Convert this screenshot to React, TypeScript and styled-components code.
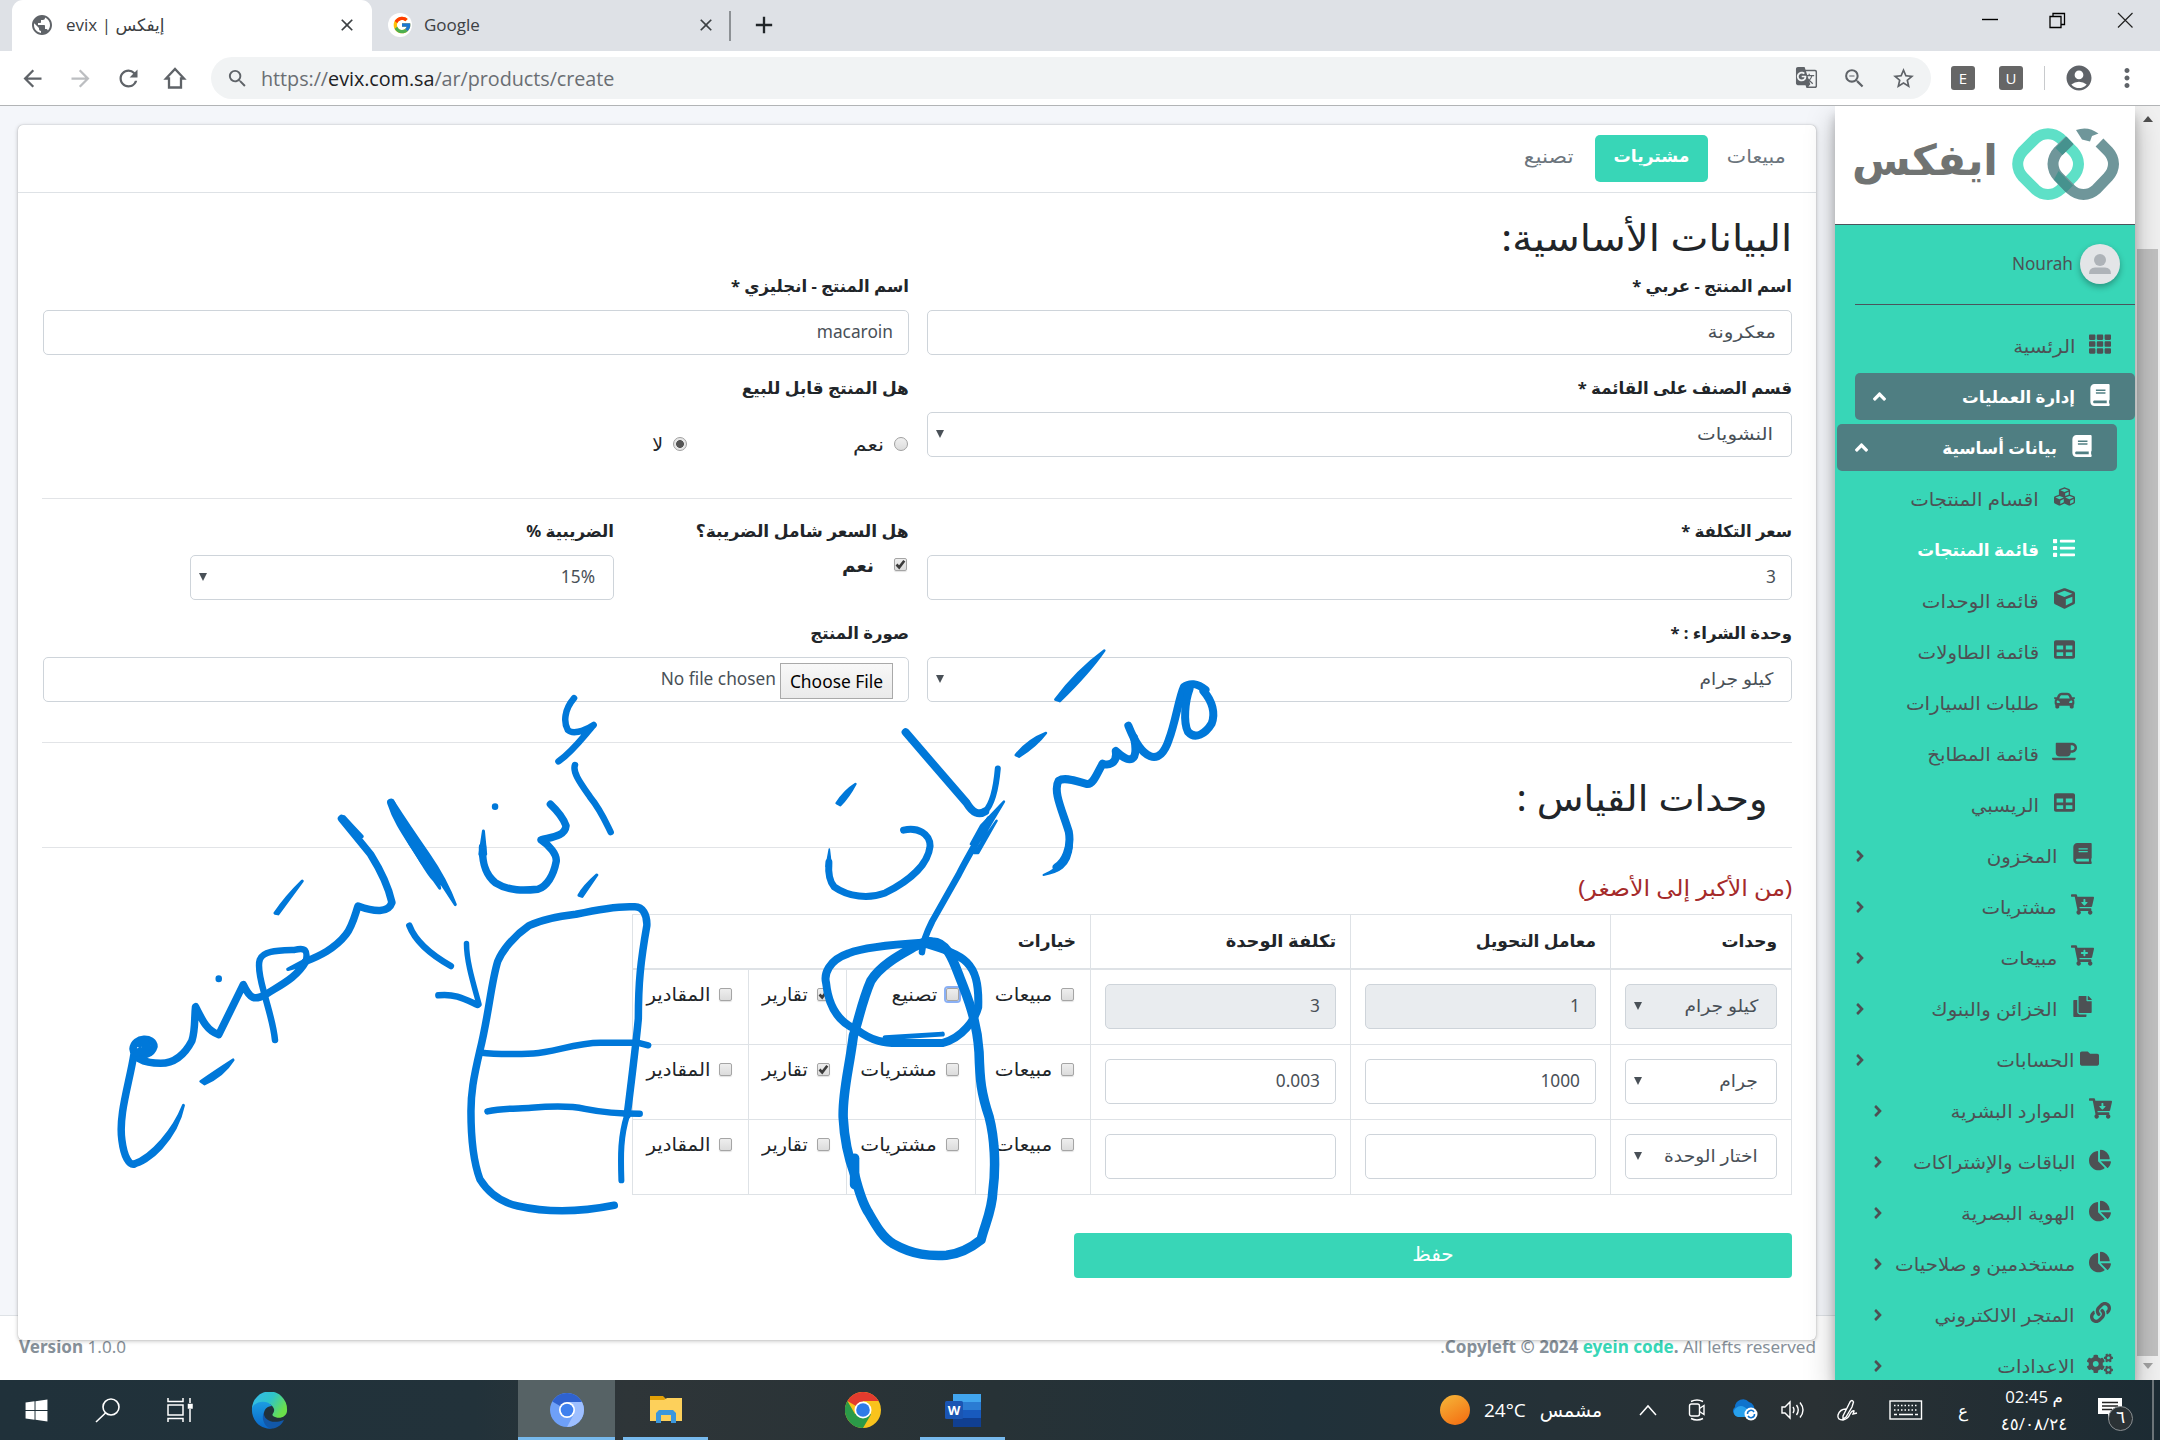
import React from "react";
import styled, { createGlobalStyle, css } from "styled-components";
import {
  FaTh, FaBook, FaAngleUp, FaAngleRight, FaCubes, FaList, FaCube, FaTable, FaCar, FaCoffee,
  FaCartArrowDown, FaCartPlus, FaCopy, FaFolder, FaChartPie, FaLink, FaCogs, FaWindows,
} from "react-icons/fa";
import {
  MdArrowBack, MdArrowForward, MdRefresh, MdSearch, MdPublic, MdGTranslate, MdZoomOut,
  MdStarBorder, MdAccountCircle, MdMoreVert, MdClose, MdAdd,
} from "react-icons/md";
import { FcGoogle } from "react-icons/fc";

const teal = "#38d6b7";
const slate = "#4f7e82";
const line = "#dee2e6";
const ink = "#0078d9";
const pageFont = `"Noto Sans", "DejaVu Sans", sans-serif`;
const chromeFont = `"Open Sans", "Noto Sans", "DejaVu Sans", sans-serif`;

const Global = createGlobalStyle`
  *, *::before, *::after { box-sizing: border-box; }
  body { margin: 0; font-family: ${pageFont}; font-size: 17px; color: #212529; overflow: hidden; }
  svg { display: block; flex: none; }
`;

const Screen = styled.div`
  width: 2160px;
  height: 1440px;
  display: flex;
  flex-direction: column;
  position: relative;
  overflow: hidden;
`;

/* Arabic set a little wider than the fallback face draws it */
const Wide = styled.span<{ $by?: number }>`
  display: inline-block;
  transform: scaleX(${(p) => p.$by ?? 1.08});
  transform-origin: right center;
`;

/* ---------- browser chrome ---------- */
const TabStrip = styled.div`
  height: 51px;
  flex: none;
  background: #dee1e6;
  display: flex;
  padding-left: 12px;
  font-family: ${chromeFont};
  font-size: 17px;
`;
const Tab = styled.div<{ $active?: boolean; $w: number }>`
  width: ${(p) => p.$w}px;
  display: flex;
  align-items: center;
  padding: 0 ${(p) => (p.$active ? 15 : 13)}px 2px ${(p) => (p.$active ? 18 : 16)}px;
  gap: 12px;
  background: ${(p) => (p.$active ? "#fff" : "transparent")};
  border-radius: 11px 11px 0 0;
  color: #3c4043;
  svg:last-child { margin-left: auto; }
`;
const FavBubble = styled.span`
  width: 24px;
  height: 24px;
  border-radius: 50%;
  background: #fff;
  display: grid;
  place-items: center;
`;
const TabRule = styled.div`
  width: 2px;
  height: 30px;
  margin: 11px 19px 0 0;
  background: #8d9195;
`;
const NewTab = styled.div`
  display: flex;
  align-items: center;
  padding-bottom: 2px;
`;
const WindowButtons = styled.div`
  margin-left: auto;
  display: flex;
  padding: 12px 27px 0 0;
  gap: 51px;
`;
const Toolbar = styled.div`
  height: 55px;
  flex: none;
  background: #fff;
  border-bottom: 1.5px solid #b2b4b6;
  display: flex;
  align-items: center;
  padding: 0 18px 0 19px;
  color: #5f6368;
`;
const NavIcons = styled.div`
  display: flex;
  gap: 21px;
  width: 192px;
`;
const Omnibox = styled.div`
  width: 1720px;
  height: 42px;
  border-radius: 21px;
  background: #f1f3f4;
  display: flex;
  align-items: center;
  padding: 0 15px;
  font-family: ${chromeFont};
  font-size: 19.8px;
`;
const Url = styled.span`
  margin-left: 12px;
  margin-right: auto;
  letter-spacing: -0.05px;
  color: #6a6e73;
  b { font-weight: 400; color: #202124; }
`;
const OmniActions = styled.div`
  display: flex;
  gap: 24px;
`;
const Extensions = styled.div`
  margin-left: auto;
  display: flex;
  align-items: center;
  svg + svg { margin-left: 18px; }
`;
const Ext = styled.span`
  width: 24px;
  height: 24px;
  border-radius: 3px;
  background: #666;
  color: #fff;
  font: 15px/24px ${chromeFont};
  text-align: center;
  margin-right: 24px;
`;
const ExtRule = styled.span`
  width: 1px;
  height: 24px;
  margin: 0 19px 0 -3px;
  background: #c8cacd;
`;

/* ---------- page ---------- */
const Page = styled.div`
  flex: 1;
  min-height: 0;
  display: flex;
  background: #f4f6fa;
  overflow: hidden;
`;
const Content = styled.div`
  width: 1835px;
  padding: 19px 0 0;
  direction: rtl;
`;
const Card = styled.main`
  position: relative;
  width: 1798px;
  height: 1215px;
  margin-right: 19px;
  background: #fff;
  border-radius: 5px;
  box-shadow: 0 0 1px rgba(0, 0, 0, 0.3), 0 1px 4px rgba(0, 0, 0, 0.25);
`;
const CardTabs = styled.div`
  height: 68px;
  display: flex;
  border-bottom: 1.5px solid ${line};
  padding: 10px 11px 0;
`;
const CardTab = styled.div<{ $active?: boolean; $w: number }>`
  width: ${(p) => p.$w}px;
  height: 47px;
  line-height: 42px;
  text-align: center;
  border-radius: 5px;
  font-size: 19px;
  color: #6c757d;
  span { transform-origin: center; }
  ${(p) => p.$active && css`background: ${teal}; color: #fff; font-weight: 700; font-size: 17.2px;`}
`;
const Body = styled.div`
  padding: 20px 24px 0;
`;
const Title = styled.h1<{ $inset?: boolean }>`
  margin: 0;
  height: 50px;
  line-height: 48px;
  font-size: 36.5px;
  font-weight: 400;
  ${(p) => p.$inset && css`height: 104px; line-height: 108px; padding-right: 25px; font-size: 35.5px;`}
`;
const FormRow = styled.div<{ $gap?: number }>`
  display: grid;
  grid-template-columns: 865px 866px;
  column-gap: 18px;
  height: 102px;
  margin-top: ${(p) => p.$gap ?? 0}px;
`;
const Label = styled.div`
  height: 49px;
  line-height: 49px;
  font-weight: 700;
  font-size: 16.6px;
  white-space: nowrap;
`;
const Box = styled.div<{ $muted?: boolean; $select?: boolean }>`
  height: 45px;
  border: 1.5px solid #ced4da;
  border-radius: 5px;
  background: ${(p) => (p.$muted ? "#e9ecef" : "#fff")};
  color: #495057;
  display: flex;
  align-items: center;
  justify-content: ${(p) => (p.$select ? "space-between" : "flex-start")};
  padding: ${(p) => (p.$select ? "0 18px 2px 8px" : "0 15px 2px")};
  font-size: 17.3px;
  white-space: nowrap;
`;
const Arrow = styled.i`
  border: 4.5px solid transparent;
  border-top: 8.5px solid #495057;
  border-bottom: 0;
`;
const RadioRow = styled.div`
  display: flex;
  padding: 24px 1px 0 0;
`;
const RadioOption = styled.div`
  width: 221px;
  display: flex;
  align-items: center;
  gap: 10px;
  font-size: 19px;
  height: 16px;
`;
const Radio = styled.span<{ $on?: boolean }>`
  width: 14px;
  height: 14px;
  border-radius: 50%;
  border: 1px solid #a0a0a0;
  background: ${(p) =>
    p.$on ? "radial-gradient(circle, #555 0 3.6px, #e6e6e6 4.2px)" : "linear-gradient(#f0f0f0, #dcdcdc)"};
`;
const Tick = styled.span<{ $focus?: boolean }>`
  width: 13px;
  height: 13px;
  border: 1px solid #a5a5a5;
  border-radius: 2px;
  background: linear-gradient(#eeeeee, #dcdcdc);
  box-shadow: ${(p) => (p.$focus ? "0 0 0 2px #8ab0f5" : "0 1px 1px rgba(0,0,0,.12)")};
  display: grid;
  place-items: center;
`;
const TaxGrid = styled.div`
  display: grid;
  grid-template-columns: 295px 424px;
`;
const CheckLine = styled.div`
  display: flex;
  gap: 20px;
  align-items: center;
  height: 18px;
  font-size: 18.5px;
  font-weight: 700;
  padding-right: 2px;
`;
const FileButton = styled.button`
  height: 36px;
  width: 113px;
  padding: 0;
  margin: 5px 0 0 4px;
  border: 1.5px solid #a9a9a9;
  background: linear-gradient(#f8f8f8, #eaeaea);
  font: 17.4px ${pageFont};
  color: #000;
`;
const Rule = styled.div<{ $top?: number }>`
  margin-top: ${(p) => p.$top ?? 0}px;
  height: 1px;
  background: #e2e4e7;
`;
const Hint = styled.div`
  height: 66px;
  line-height: 79px;
  color: #a52a2a;
  font-size: 22px;
`;
const Table = styled.div`
  width: 1160px;
  border: 1.5px solid ${line};
`;
const TableRow = styled.div<{ $head?: boolean }>`
  display: grid;
  grid-template-columns: ${(p) => (p.$head ? "181px 260px 260px 1fr" : "181px 260px 260px 115px 129px 98px 1fr")};
  height: ${(p) => (p.$head ? 55 : 75)}px;
  border-bottom: ${(p) => (p.$head ? 2.5 : 1)}px solid ${line};
  &:last-child { border-bottom: 0; height: 74px; }
`;
const Cell = styled.div<{ $last?: boolean }>`
  padding: 14px;
  border-left: ${(p) => (p.$last ? 0 : 1)}px solid ${line};
`;
const HeadCell = styled(Cell)`
  padding: 0 14px;
  line-height: 52px;
  font-size: 17px;
  font-weight: 700;
`;
const OptionCell = styled(Cell)`
  padding: 18px 16px 0 0;
  display: flex;
  align-items: flex-start;
  gap: 9px;
  white-space: nowrap;
  font-size: 18.6px;
  line-height: 12px;
`;
const Save = styled.button`
  display: block;
  width: 718px;
  height: 45px;
  margin-top: 38px;
  padding: 0 0 5px;
  border: 0;
  border-radius: 4px;
  background: ${teal};
  color: #fff;
  font: 20px ${pageFont};
`;
const Footer = styled.footer`
  height: 66px;
  margin-top: -25px;
  padding: 18px 19px 0;
  background: #fff;
  border-top: 1.5px solid ${line};
  display: flex;
  justify-content: space-between;
  color: #869099;
  font-size: 17.1px;
  line-height: 26px;
  em { font-style: normal; color: ${teal}; }
`;

/* ---------- sidebar ---------- */
const Sidebar = styled.aside`
  position: relative;
  width: 300px;
  background: ${teal};
  box-shadow: 0 14px 28px rgba(0, 0, 0, 0.25), 0 10px 10px rgba(0, 0, 0, 0.22);
  direction: rtl;
  color: #4d5154;
`;
const Brand = styled.div`
  height: 119px;
  background: #fff;
  border-bottom: 1.5px solid #4b545c;
  direction: ltr;
  display: flex;
  align-items: center;
  justify-content: space-between;
  padding: 0 15px 1px 17px;
`;
const BrandName = styled.span`
  color: #707372;
  font: 700 42.5px/60px "DejaVu Sans", sans-serif;
  margin-top: -8px;
`;
const UserPanel = styled.div`
  height: 80px;
  margin-left: 20px;
  border-bottom: 1.5px solid #4b545c;
  display: flex;
  align-items: center;
  gap: 7px;
  padding: 0 15px 2px 0;
  font-size: 17.2px;
`;
const Avatar = styled.span`
  width: 40px;
  height: 40px;
  border-radius: 50%;
  background: #e3e5e7;
  box-shadow: 0 3px 6px rgba(0, 0, 0, 0.3);
`;
const Nav = styled.nav`
  padding-top: 17px;
`;
const NavItem = styled.div<{ $level: number; $active?: boolean; $on?: boolean }>`
  width: 280px;
  height: 47px;
  margin: 0 ${(p) => p.$level * 18}px 4px 0;
  padding: 0 21px 0 14px;
  display: flex;
  align-items: center;
  border-radius: 5px;
  font-size: 18.6px;
  white-space: nowrap;
  ${(p) => p.$active && css`background: ${slate}; color: #fff; font-weight: 700; font-size: 16.7px;`}
  ${(p) => p.$on && css`color: #fff; font-weight: 700; font-size: 16.8px;`}
`;
const NavIcon = styled.span<{ $tight?: boolean }>`
  width: 28px;
  display: grid;
  place-items: center;
  margin: -4px 0 0 ${(p) => (p.$tight ? 0 : 11)}px;
  ${(p) => p.$tight && css`margin: -2px -7px 0 1px;`}
`;
const NavArrow = styled.span`
  margin-right: auto;
`;
const ScrollBar = styled.div`
  width: 25px;
  background: #f1f1f1;
  display: flex;
  flex-direction: column;
  align-items: center;
  padding: 10px 0 11px;
`;
const Thumb = styled.div`
  width: 21px;
  height: 1107px;
  margin: 127px 0 auto;
  background: #c1c1c1;
`;
const ScrollArrow = styled.i<{ $down?: boolean }>`
  border: 5.5px solid transparent;
  ${(p) =>
    p.$down
      ? css`border-top: 6px solid #a3a3a3; border-bottom: 0;`
      : css`border-bottom: 6px solid #505050; border-top: 0;`}
`;

/* ---------- ink ---------- */
const Ink = styled.svg`
  position: absolute;
  left: 0;
  top: 0;
  pointer-events: none;
  path { vector-effect: non-scaling-stroke; }
`;

/* ---------- taskbar ---------- */
const Taskbar = styled.div`
  height: 60px;
  flex: none;
  display: flex;
  background: linear-gradient(90deg, #20313a 0%, #22323a 22%, #2e3538 29%, #273236 46%, #20313a 60%, #2a3134 84%, #1c2b33 100%);
  color: #fff;
  font-family: ${chromeFont};
`;
const Slot = styled.div<{ $w: number; $state?: "open" | "active" }>`
  width: ${(p) => p.$w}px;
  display: flex;
  align-items: center;
  justify-content: center;
  padding-top: 3px;
  border-bottom: 3px solid ${(p) => (p.$state ? "#76b9ed" : "transparent")};
  background: ${(p) => (p.$state === "active" ? "#566265" : "transparent")};
`;
const Weather = styled.div`
  display: flex;
  align-items: center;
  width: 190px;
  font-size: 19px;
  gap: 14px;
`;
const Sun = styled.span`
  width: 30px;
  height: 30px;
  border-radius: 50%;
  background: linear-gradient(150deg, #f5b83a, #f4690f);
`;
const Clock = styled.div`
  width: 84px;
  font-size: 16.8px;
  line-height: 27px;
  text-align: center;
  padding-top: 3px;
  white-space: nowrap;
`;
const Badge = styled.span`
  position: absolute;
  left: 11px;
  top: 9px;
  width: 25px;
  height: 25px;
  border-radius: 50%;
  border: 1.5px solid #8a8f92;
  background: #2b3235;
  font-size: 17px;
  line-height: 20px;
  text-align: center;
`;
const Notice = styled.div`
  position: relative;
  width: 36px;
  height: 34px;
  margin: 17px 0 0 21px;
`;
const ShowDesktop = styled.div`
  margin-left: auto;
  width: 8px;
  border-left: 2px solid #6c7478;
`;

type Item = { text: string; icon: React.ReactNode; level: number; arrow?: "up" | "side"; active?: boolean; on?: boolean; tight?: boolean };
const items: Item[] = [
  { text: "الرئسية", icon: <FaTh size={22} />, level: 0 },
  { text: "إدارة العمليات", icon: <FaBook size={22} />, level: 0, arrow: "up", active: true },
  { text: "بيانات أساسية", icon: <FaBook size={22} />, level: 1, arrow: "up", active: true },
  { text: "اقسام المنتجات", icon: <FaCubes size={21} />, level: 2 },
  { text: "قائمة المنتجات", icon: <FaList size={22} />, level: 2, on: true },
  { text: "قائمة الوحدات", icon: <FaCube size={21} />, level: 2 },
  { text: "قائمة الطاولات", icon: <FaTable size={21} />, level: 2 },
  { text: "طلبات السيارات", icon: <FaCar size={21} />, level: 2 },
  { text: "قائمة المطابخ", icon: <FaCoffee size={25} />, level: 2 },
  { text: "الريسبي", icon: <FaTable size={21} />, level: 2 },
  { text: "المخزون", icon: <FaBook size={21} />, level: 1, arrow: "side" },
  { text: "مشتريات", icon: <FaCartArrowDown size={23} />, level: 1, arrow: "side" },
  { text: "مبيعات", icon: <FaCartPlus size={23} />, level: 1, arrow: "side" },
  { text: "الخزائن والبنوك", icon: <FaCopy size={21} />, level: 1, arrow: "side" },
  { text: "الحسابات", icon: <FaFolder size={19} />, level: 1, arrow: "side", tight: true },
  { text: "الموارد البشرية", icon: <FaCartArrowDown size={23} />, level: 0, arrow: "side" },
  { text: "الباقات والإشتراكات", icon: <FaChartPie size={22} />, level: 0, arrow: "side" },
  { text: "الهوية البصرية", icon: <FaChartPie size={22} />, level: 0, arrow: "side" },
  { text: "مستخدمين و صلاحيات", icon: <FaChartPie size={22} />, level: 0, arrow: "side" },
  { text: "المتجر الالكتروني", icon: <FaLink size={21} />, level: 0, arrow: "side" },
  { text: "الاعدادات", icon: <FaCogs size={26} />, level: 0, arrow: "side" },
];

const units = [
  { unit: "كيلو جرام", factor: "1", cost: "3", second: "تصنيع", muted: true, reports: true, focus: true },
  { unit: "جرام", factor: "1000", cost: "0.003", second: "مشتريات", reports: true },
  { unit: "اختار الوحدة", factor: "", cost: "", second: "مشتريات" },
];

const Check = ({ on, focus }: { on?: boolean; focus?: boolean }) => (
  <Tick $focus={focus}>
    {on && (
      <svg width="11" height="11" viewBox="0 0 11 11">
        <path d="M1.5 5.5 L4.2 8.4 L9.3 1.8" fill="none" stroke="#3c3c3c" strokeWidth="2.6" />
      </svg>
    )}
  </Tick>
);

const Logo = () => (
  <svg width="108" height="73" viewBox="0 0 108 73">
    <path d="M36 5.7 Q43 5.7 48.500 10.500 L61 23 Q66.500 29 66.500 36 Q66.500 43 61 49 L48.500 61.500 Q43 66.500 36 66.500 Q29 66.500 23.500 61.500 L11 49 Q5.700 43 5.700 36 Q5.700 29 11 23 L23.500 10.500 Q29 5.700 36 5.700 Z" fill="none" stroke="#5ee0c7" strokeWidth="11" />
    <path d="M57.500 12.500 L46.500 23 Q41 29 41 36 Q41 43 46.500 49 L59 61.500 Q64.500 66.500 71.500 66.500 Q78.500 66.500 84 61.500 L96 49 Q101.500 43 101.500 36 Q101.500 29 96 23 L87.500 14.500" fill="none" stroke="#6f969a" strokeWidth="11" />
    <path d="M54.500 8.500 L61.500 16 L50.500 27 L43.500 20 Z M46.500 43 L61 57.500 L54 64.500 L42 51.500 Z" fill="#46928e" />
    <path d="M64 2 Q76 -2.500 86.500 5.500 L80 8 L78 13.500 L70 11.500 Z" fill="#6f969a" />
  </svg>
);

const Browser = () => (
  <>
    <TabStrip>
      <Tab $active $w={360}>
        <MdPublic size={24} color="#5f6368" />
        <span>evix | إيفكس</span>
        <MdClose size={20} />
      </Tab>
      <Tab $w={357}>
        <FavBubble><FcGoogle size={20} /></FavBubble>
        <span>Google</span>
        <MdClose size={20} />
      </Tab>
      <TabRule />
      <NewTab><MdAdd size={28} /></NewTab>
      <WindowButtons>
        <svg width="16" height="17"><path d="M0 7.5H16" stroke="#000" strokeWidth="1.4" /></svg>
        <svg width="17" height="17" fill="none" stroke="#000" strokeWidth="1.3"><path d="M1 4.5H12V15.5H1Z M4 4V1.5H15.5V12.5H12" /></svg>
        <svg width="16" height="17"><path d="M1 1 L15.5 15.5 M15.5 1 L1 15.5" stroke="#222" strokeWidth="1.2" /></svg>
      </WindowButtons>
    </TabStrip>
    <Toolbar>
      <NavIcons>
        <MdArrowBack size={27} />
        <MdArrowForward size={27} color="#bcbec1" />
        <MdRefresh size={27} />
        <svg width="24" height="26" viewBox="0 0 24 26" fill="none" stroke="#5f6368" strokeWidth="2.3">
          <path d="M3 13.5 L12 4 L21 13.5 H18 V22.5 H6 V13.5 Z" />
        </svg>
      </NavIcons>
      <Omnibox>
        <MdSearch size={23} />
        <Url>https://<b>evix.com.sa</b>/ar/products/create</Url>
        <OmniActions>
          <MdGTranslate size={23} />
          <MdZoomOut size={25} />
          <MdStarBorder size={25} />
        </OmniActions>
      </Omnibox>
      <Extensions>
        <Ext>E</Ext>
        <Ext>U</Ext>
        <ExtRule />
        <MdAccountCircle size={30} />
        <MdMoreVert size={30} />
      </Extensions>
    </Toolbar>
  </>
);

const ProductForm = () => (
  <Card>
    <CardTabs>
      <CardTab $w={97}><Wide>مبيعات</Wide></CardTab>
      <CardTab $w={113} $active>مشتريات</CardTab>
      <CardTab $w={92}><Wide $by={1.15}>تصنيع</Wide></CardTab>
    </CardTabs>
    <Body>
      <Title><Wide $by={1.105}>البيانات الأساسية:</Wide></Title>
      <FormRow $gap={-2}>
        <div><Label>اسم المنتج - عربي *</Label><Box><Wide $by={1.16}>معكرونة</Wide></Box></div>
        <div><Label>اسم المنتج - انجليزي *</Label><Box>macaroin</Box></div>
      </FormRow>
      <FormRow>
        <div><Label>قسم الصنف على القائمة *</Label><Box $select><Wide $by={1.15}>النشويات</Wide><Arrow /></Box></div>
        <div>
          <Label><Wide $by={1.02}>هل المنتج قابل للبيع</Wide></Label>
          <RadioRow>
            <RadioOption><Radio /><Wide $by={1.15}>نعم</Wide></RadioOption>
            <RadioOption><Radio $on />لا</RadioOption>
          </RadioRow>
        </div>
      </FormRow>
      <Rule $top={33} />
      <FormRow $gap={7}>
        <div><Label>سعر التكلفة *</Label><Box>3</Box></div>
        <TaxGrid>
          <div>
            <Label><Wide $by={1.03}>هل السعر شامل الضريبة؟</Wide></Label>
            <CheckLine><Check on />نعم</CheckLine>
          </div>
          <div><Label>الضريبية %</Label><Box $select>15%<Arrow /></Box></div>
        </TaxGrid>
      </FormRow>
      <FormRow>
        <div><Label>وحدة الشراء : *</Label><Box $select><Wide>كيلو جرام</Wide><Arrow /></Box></div>
        <div>
          <Label>صورة المنتج</Label>
          <Box><FileButton>Choose File</FileButton>No file chosen</Box>
        </div>
      </FormRow>
      <Rule $top={32} />
      <Title $inset><Wide $by={1.08}>وحدات القياس :</Wide></Title>
      <Rule />
      <Hint><Wide>(من الأكبر إلى الأصغر)</Wide></Hint>
      <Table>
        <TableRow $head>
          <HeadCell>وحدات</HeadCell>
          <HeadCell>معامل التحويل</HeadCell>
          <HeadCell><Wide $by={1.05}>تكلفة الوحدة</Wide></HeadCell>
          <HeadCell $last>خيارات</HeadCell>
        </TableRow>
        {units.map((u, i) => (
          <TableRow key={i}>
            <Cell><Box $select $muted={u.muted}><Wide>{u.unit}</Wide><Arrow /></Box></Cell>
            <Cell><Box $muted={u.muted}>{u.factor}</Box></Cell>
            <Cell><Box $muted={u.muted}>{u.cost}</Box></Cell>
            <OptionCell><Check /><Wide>مبيعات</Wide></OptionCell>
            <OptionCell><Check focus={u.focus} /><Wide>{u.second}</Wide></OptionCell>
            <OptionCell><Check on={u.reports} /><Wide $by={1.02}>تقارير</Wide></OptionCell>
            <OptionCell $last><Check /><Wide $by={1.06}>المقادير</Wide></OptionCell>
          </TableRow>
        ))}
      </Table>
      <Save>حفظ</Save>
    </Body>
  </Card>
);

const InkStrokes = () => (
  <Ink width="2160" height="1440" viewBox="0 0 2160 1440" fill="none" stroke={ink} strokeLinecap="round" strokeLinejoin="round">
    <g transform="matrix(0.4464 0 0 0.3571 0 640)" strokeWidth="6.500">
      <path d="M1286 163 C1264 195 1262 230 1272 252 C1282 264 1305 258 1330 238 C1312 262 1285 310 1251 340" />
      <path d="M1288 350 C1282 370 1300 400 1322 440 C1345 475 1355 505 1368 538" />
      <path d="M1109 466 V467 M490 948 V949" />
      <path d="M1233 460 C1250 480 1262 500 1268 520 C1266 550 1235 552 1212 560 C1230 575 1248 600 1246 620 C1240 660 1225 690 1205 698 C1175 702 1140 704 1110 680 C1085 655 1080 620 1081 580" strokeWidth="7.500" />
      <path d="M1075 600 L1083 535 L1088 600 Z M1297 715 Q1308 690 1337 658 L1304 718 Z M616 765 Q640 720 677 675 L623 767 Z M450 1236 Q480 1210 522 1176 Q500 1220 458 1243 Z" fill={ink} strokeWidth="3" />
      <path d="M876 455 C880 480 900 530 918 570 C940 610 955 650 972 672 L985 695 L980 665 L1020 741 C1005 690 985 645 960 600 C935 555 900 490 882 455 Z" fill={ink} strokeWidth="3" />
      <path d="M876 455 C890 510 915 550 950 620" strokeWidth="8" />
      <path d="M765 500 L830 600 C855 650 870 690 878 735 C870 765 840 762 802 745 C795 770 790 800 775 825 C750 865 715 885 685 900" strokeWidth="7.500" />
      <path d="M763 503 L795 548 L811 550 L790 522 L770 495 Z M645 922 L690 892 L680 910 Z" fill={ink} strokeWidth="3.500" />
      <path d="M685 900 C690 870 685 860 660 868 C620 870 590 870 582 895 C575 920 588 970 593 995 C605 1050 613 1080 616 1120" />
      <path d="M685 900 C665 945 630 965 595 993 C570 1010 560 1005 545 965 L490 1105 C465 1095 455 1070 438 1027 C435 1060 438 1090 430 1122 C410 1170 385 1185 360 1185 C320 1185 300 1170 298 1145 C300 1110 345 1110 345 1138 C340 1160 320 1168 300 1160 C290 1240 265 1330 273 1400 C278 1450 290 1470 300 1468" strokeWidth="7.500" />
      <path d="M312 1130 C325 1120 335 1135 322 1150 L308 1155" strokeWidth="8" />
      <path d="M298 1462 C340 1445 390 1370 411 1303 C395 1400 330 1470 300 1472 Z" fill={ink} strokeWidth="3" />
      <path d="M917 800 Q935 860 1010 913 M982 995 C1020 990 1040 1005 1070 1022" />
      <path d="M1045 850 C1045 900 1060 960 1073 1020" strokeWidth="5.500" />
      <path d="M1392 1513 C1390 1440 1390 1390 1405 1330 C1415 1230 1425 1130 1430 1060" strokeWidth="6" />
      <path d="M1405 1330 C1415 1230 1425 1130 1430 1060 C1430 960 1435 900 1449 800 C1450 770 1440 745 1420 747 C1390 745 1330 757 1290 768 C1240 775 1210 785 1185 800 C1150 830 1125 870 1115 900 C1100 960 1095 1050 1075 1150 C1060 1230 1055 1270 1055 1320 C1055 1400 1060 1460 1075 1510 C1095 1550 1125 1575 1160 1585 C1230 1605 1300 1602 1376 1583" strokeWidth="7.500" />
      <path d="M1075 1155 C1120 1162 1160 1160 1195 1158 C1240 1155 1290 1128 1345 1128 L1430 1128 L1452 1135 M1092 1320 C1130 1310 1160 1313 1190 1310 C1240 1305 1280 1305 1310 1313 C1350 1323 1400 1327 1433 1327" />
    </g>
    <g transform="translate(620 640) scale(0.408)" strokeWidth="8">
      <path d="M1067 146 Q1120 75 1187 26 Q1150 80 1078 150 Z M970 282 Q1000 245 1044 228 Q1020 260 978 286 Z M531 400 Q550 370 577 353 Q560 385 540 405 Z" fill={ink} strokeWidth="2.500" />
      <path d="M1435 122 C1415 105 1395 105 1382 115 C1370 140 1362 200 1345 245 C1335 275 1320 292 1300 285 C1275 275 1260 245 1246 210" />
      <path d="M1260 240 C1272 300 1250 305 1215 272 C1220 305 1195 308 1183 303 C1170 325 1160 355 1145 353 C1115 345 1090 335 1075 345 C1060 370 1085 420 1100 470 C1107 510 1090 545 1070 557" />
      <path d="M1038 576 C1080 560 1095 530 1098 490 L1108 500 C1105 560 1070 570 1038 576 Z" fill={ink} strokeWidth="2" />
      <path d="M1396 120 C1385 150 1380 200 1392 225 C1410 245 1435 230 1450 205 C1460 180 1452 150 1430 125" />
      <path d="M850 400 C865 425 880 430 895 420 C915 400 922 360 926 315" strokeWidth="6" />
      <path d="M700 226 L850 400 C865 425 880 430 895 420" strokeWidth="8" />
      <path d="M868 522 L923 443 L878 522 Z M941 396 L885 455 L860 500 L885 490 Z" fill={ink} strokeWidth="2.500" />
      <path d="M905 440 C880 485 850 535 830 575 L765 690 C750 720 742 740 740 765" strokeWidth="6.500" />
      <path d="M695 466 C730 458 760 475 760 505 C755 550 710 590 650 620 C610 635 560 630 525 605 C512 590 510 570 512 545" strokeWidth="7" />
      <path d="M505 555 L513 512 L518 555 Z" fill={ink} strokeWidth="1.500" />
      <path d="M740 742 C690 745 600 752 560 768 C510 785 500 820 505 840 C510 890 530 935 580 955 C620 985 650 988 680 988 L790 988 C840 975 870 930 878 900 C880 840 870 810 850 790 C830 770 800 760 740 742" />
      <path d="M650 975 L790 966" strokeWidth="5" />
      <path d="M725 750 C690 770 640 795 615 835 C595 880 585 930 572 970 C560 1060 545 1110 547 1170 C550 1230 560 1270 575 1310 C585 1350 600 1390 610 1405 C630 1440 645 1465 670 1480 C720 1508 760 1510 800 1508 C830 1505 860 1490 885 1470 C895 1430 912 1400 914 1350 C922 1290 918 1220 905 1170 C885 1110 882 1080 880 1010 C875 930 850 870 830 820 C815 780 800 740 765 740 C750 738 740 742 725 750" strokeWidth="9.500" />
      <path d="M575 1270 V1335" strokeWidth="9.500" />
    </g>
  </Ink>
);

const WindowsTaskbar = () => (
  <Taskbar>
    <Slot $w={72}><FaWindows size={25} /></Slot>
    <Slot $w={72}>
      <svg width="26" height="26" fill="none" stroke="#fff" strokeWidth="1.6"><circle cx="16" cy="10" r="8" /><path d="M10.5 16 L1 25" /></svg>
    </Slot>
    <Slot $w={72}>
      <svg width="26" height="26" fill="none" stroke="#fff" strokeWidth="1.5">
        <path d="M1 1V4.500H16V1 M1 8H16V18H1Z M1 25V21.500H16V25 M23 1V6 M23 12V25" /><path d="M21.500 7.500H25V11H21.500Z" fill="#fff" />
      </svg>
    </Slot>
    <Slot $w={106}>
      <svg width="37" height="37" viewBox="0 0 37 37">
        <defs>
          <linearGradient id="edgeTop" x1="0" y1="0" x2="1" y2=".5"><stop offset="0" stopColor="#35b8f0" /><stop offset=".55" stopColor="#2fc4c8" /><stop offset="1" stopColor="#6be04a" /></linearGradient>
          <linearGradient id="edgeSide" x1="0" y1="0" x2="0" y2="1"><stop offset="0" stopColor="#1b9de2" /><stop offset="1" stopColor="#0a66c8" /></linearGradient>
        </defs>
        <path d="M1 17 A17.500 17.500 0 0 1 36 17 C37 25 28 28 22 24 C20 22 24 21 23 17 C21 10 8 8 1 17 Z" fill="url(#edgeTop)" />
        <path d="M1 16 C5 8 17 8 21 14 C15 14 12 19 13 25 C14 31 18 35 21 36.500 C9 38 0 28 1 16 Z" fill="url(#edgeSide)" />
        <path d="M13 20 C12 27 20 33 33 28 C30 34 25 37 19 36.500 C13 34 10 26 13 20 Z" fill="#1258a8" />
      </svg>
    </Slot>
    <Slot $w={196} />
    <Slot $w={97} $state="active">
      <svg width="34" height="34" viewBox="-17 -17 34 34">
        <circle r="17" fill="#6ea0f8" />
        <path d="M0 0 L-14.700 -8.500 A17 17 0 0 1 14.700 -8.500 Z" fill="#2f62cf" />
        <path d="M0 -8 H15 A17 17 0 0 1 0 17 L7 4 Z" fill="#9ebfff" />
        <circle r="8" fill="#fff" /><circle r="6.300" fill="#3f80ee" />
      </svg>
    </Slot>
    <Slot $w={8} />
    <Slot $w={85} $state="open">
      <svg width="34" height="28" viewBox="0 0 34 28">
        <path d="M1 0H14L17 3V8H1Z" fill="#e2a006" /><path d="M1 4H15L18 2H33V25H1Z" fill="#fdd05b" />
        <path d="M7 27V17L10 14H24L27 17V27H22V19H12V27Z" fill="#3b97dd" />
      </svg>
    </Slot>
    <Slot $w={112} />
    <Slot $w={85}>
      <svg width="36" height="36" viewBox="-18 -18 36 36">
        <circle r="18" fill="#f9c31c" />
        <path d="M0 0 L-15.600 -9 A18 18 0 0 1 15.600 -9 H0 Z" fill="#e33b2e" />
        <path d="M-15.600 -9 A18 18 0 0 0 0 18 L8 4.500 L0 0 L-8 4 Z" fill="#2b9a48" />
        <circle r="8.500" fill="#fff" /><circle r="6.800" fill="#2f7be8" />
      </svg>
    </Slot>
    <Slot $w={15} />
    <Slot $w={85} $state="open">
      <svg width="36" height="33" viewBox="0 0 36 33">
        <path d="M8 0H36V9H8Z" fill="#41a5ee" /><path d="M8 8H36V17H8Z" fill="#2b7cd3" /><path d="M8 16H36V25H8Z" fill="#185abd" /><path d="M8 24H36V33H8Z" fill="#103f91" />
        <rect y="7" width="18" height="18" rx="1.500" fill="#1a55b3" />
        <text x="9" y="21" textAnchor="middle" fontSize="13" fontWeight="700" fontFamily="Open Sans, sans-serif" fill="#fff">W</text>
      </svg>
    </Slot>
    <Slot $w={435} />
    <Weather><Sun /><span>24°C</span><span>مشمس</span></Weather>
    <Slot $w={36}><svg width="18" height="12" fill="none" stroke="#fff" strokeWidth="1.500"><path d="M1 11 L9 2 L17 11" /></svg></Slot>
    <Slot $w={61}>
      <svg width="18" height="22" fill="none" stroke="#fff" strokeWidth="1.400"><rect x="1.500" y="5" width="10" height="12" rx="2" /><path d="M11.500 9.500L16 6.500V15.500L11.500 12.500 M3 2.500Q9 -.5 15 2.500 M3 19.500Q9 22.500 15 19.500" /></svg>
    </Slot>
    <Slot $w={35}>
      <svg width="26" height="22" viewBox="0 0 26 22"><path d="M6 17 A5 5 0 0 1 3 8 A8 8 0 0 1 17 3 A7 7 0 0 1 22 12 L16 18 Z" fill="#0f73cd" /><path d="M4 9 Q10 4 17 12 L14 18 H6 A5 5 0 0 1 4 9Z" fill="#28a0ec" /><circle cx="19" cy="15" r="6.500" fill="#fff" /><path d="M15.500 15A3.500 3.500 0 0 1 22 13 M22.500 15A3.500 3.500 0 0 1 16 17" fill="none" stroke="#0f73cd" strokeWidth="1.500" /></svg>
    </Slot>
    <Slot $w={61}>
      <svg width="24" height="20" fill="none" stroke="#fff" strokeWidth="1.400"><path d="M1 7H4L9 2V18L4 13H1Z M12 7Q14 10 12 13 M15.500 5Q19 10 15.500 15 M19 2.500Q25 10 19 17.500" /></svg>
    </Slot>
    <Slot $w={47}>
      <svg width="22" height="22" fill="none" stroke="#fff" strokeWidth="1.400"><path d="M7 17L14 3Q16 0 17.500 3L16 8L10 18L7 20Z M10 10Q4 10 2 16Q1 21 7 21Q12 20 14 15Q16 11 18 12L17 15L21 14" /></svg>
    </Slot>
    <Slot $w={72}>
      <svg width="34" height="20" fill="none" stroke="#fff" strokeWidth="1.400"><rect x="1" y="1" width="31.500" height="18" /><path d="M5 5.500H29 M5 10H29" strokeDasharray="1.500 2" /><path d="M5 14.500H8 M10 14.500H24 M26 14.500H29" /></svg>
    </Slot>
    <Slot $w={42}>ع</Slot>
    <Slot $w={8} />
    <Clock><div dir="ltr">02:45 م</div><div dir="ltr">٤٥/٠٨/٢٤</div></Clock>
    <Notice>
      <svg width="26" height="26"><path d="M1 1H25V17H17L11 23V17H1Z" fill="#fff" /><path d="M5 5.500H21 M5 9H21 M5 12.500H15" stroke="#222" strokeWidth="1.300" /></svg>
      <Badge>٦</Badge>
    </Notice>
    <ShowDesktop />
  </Taskbar>
);

export default function App() {
  return (
    <Screen>
      <Global />
      <Browser />
      <Page>
        <Content>
          <ProductForm />
          <Footer>
            <div><b>Copyleft © 2024 <em>eyein code</em>.</b> All lefts reserved.</div>
            <div dir="ltr"><b>Version</b> 1.0.0</div>
          </Footer>
        </Content>
        <Sidebar>
          <Brand><BrandName>ايفكس</BrandName><Logo /></Brand>
          <UserPanel>
            <Avatar>
              <svg width="40" height="40" fill="#aeb3b8"><circle cx="20" cy="16" r="6" /><path d="M9 30 Q9 23.500 15 23.500 H25 Q31 23.500 31 30 Z" /></svg>
            </Avatar>
            Nourah
          </UserPanel>
          <Nav>
            {items.map((it, i) => (
              <NavItem key={i} $level={it.level} $active={it.active} $on={it.on}>
                <NavIcon $tight={it.tight}>{it.icon}</NavIcon>
                <Wide $by={it.active || it.on ? 1 : 1.065}>{it.text}</Wide>
                {it.arrow && <NavArrow>{it.arrow === "up" ? <FaAngleUp size={21} /> : <FaAngleRight size={18} />}</NavArrow>}
              </NavItem>
            ))}
          </Nav>
        </Sidebar>
        <ScrollBar><ScrollArrow /><Thumb /><ScrollArrow $down /></ScrollBar>
      </Page>
      <WindowsTaskbar />
      <InkStrokes />
    </Screen>
  );
}
